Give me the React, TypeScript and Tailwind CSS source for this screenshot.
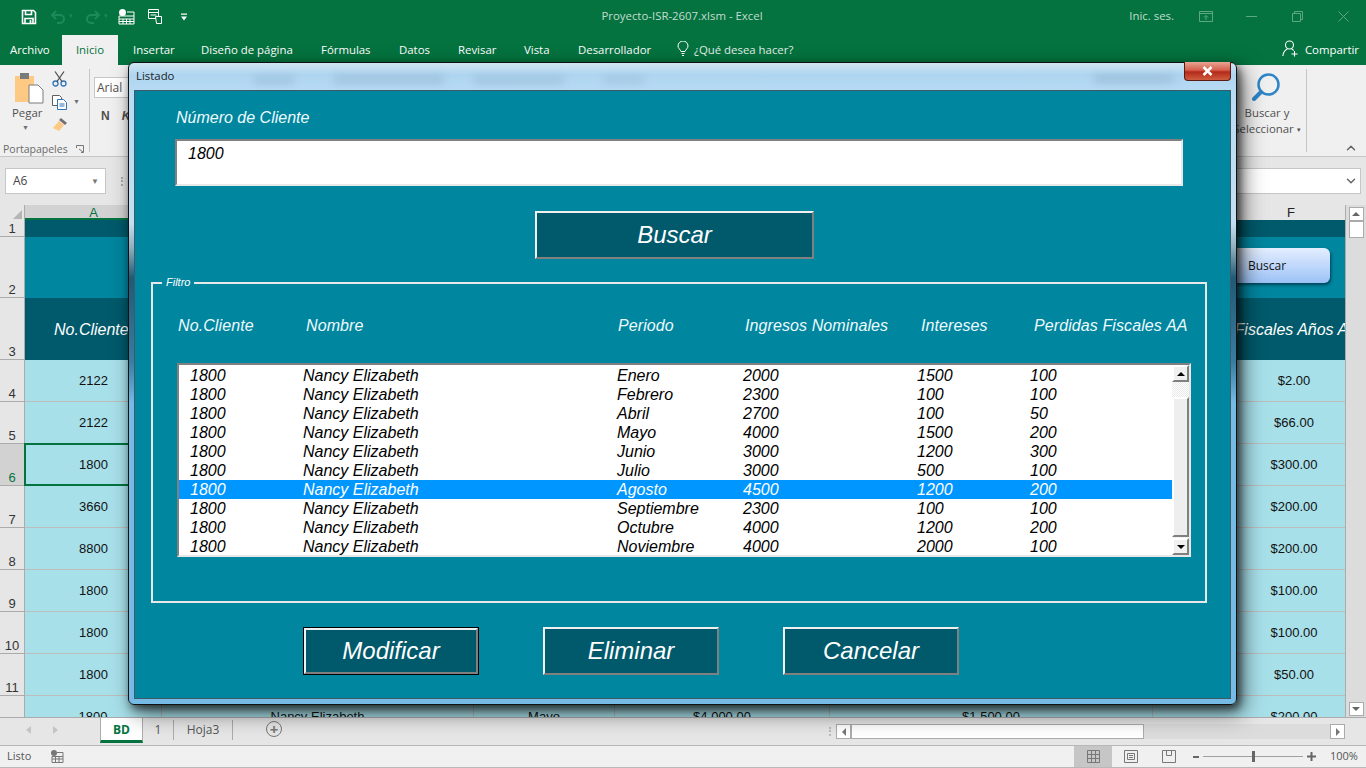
import { ChevronDown, ChevronUp } from "lucide-react"

const ui = "font-['Open_Sans',sans-serif]"

const tabs = [
	["Insertar", "w-[68px]"],
	["Diseño de página", "w-[120px]"],
	["Fórmulas", "w-[78px]"],
	["Datos", "w-[59px]"],
	["Revisar", "w-[66px]"],
	["Vista", "w-[54px]"],
	["Desarrollador", "w-[99px]"],
]

const listRows = [
	["Nancy Elizabeth", "Enero", "2000", "1500", "100"],
	["Nancy Elizabeth", "Febrero", "2300", "100", "100"],
	["Nancy Elizabeth", "Abril", "2700", "100", "50"],
	["Nancy Elizabeth", "Mayo", "4000", "1500", "200"],
	["Nancy Elizabeth", "Junio", "3000", "1200", "300"],
	["Nancy Elizabeth", "Julio", "3000", "500", "100"],
	["Nancy Elizabeth", "Agosto", "4500", "1200", "200"],
	["Nancy Elizabeth", "Septiembre", "2300", "100", "100"],
	["Nancy Elizabeth", "Octubre", "4000", "1200", "200"],
	["Nancy Elizabeth", "Noviembre", "4000", "2000", "100"],
]

const sheetRows = [
	["4", "2122", "$2.00"],
	["5", "2122", "$66.00"],
	["6", "1800", "$300.00"],
	["7", "3660", "$200.00"],
	["8", "8800", "$200.00"],
	["9", "1800", "$100.00"],
	["10", "1800", "$100.00"],
	["11", "1800", "$50.00"],
]

function Qat() {
	return (
		<div className="flex items-center pl-[21px] w-[400px]">
			<svg width="16" height="16" viewBox="0 0 16 16" fill="none" stroke="#fff" strokeWidth="1.6">
				<path d="M1.5 1.5h11l2 2v11h-13z" />
				<path d="M4.5 1.5v4h6v-4M4 14.5v-5h8v5" />
				<path d="M9.5 11v3" />
			</svg>
			<svg className="ml-[13px]" width="16" height="16" viewBox="0 0 16 16" fill="none" stroke="#1d8a5c" strokeWidth="2">
				<path d="M6 2 2 6l4 4M2 6h8a4 4 0 0 1 0 8H7" />
			</svg>
			<span className="ml-[3px] text-[7px] text-[#1d8a5c]">▾</span>
			<svg className="ml-[12px]" width="16" height="16" viewBox="0 0 16 16" fill="none" stroke="#1d8a5c" strokeWidth="2">
				<path d="m10 2 4 4-4 4M14 6H6a4 4 0 0 0 0 8h3" />
			</svg>
			<span className="ml-[3px] text-[7px] text-[#1d8a5c]">▾</span>
			<svg className="ml-[10px]" width="17" height="16" viewBox="0 0 17 16" fill="none">
				<circle cx="4.5" cy="3.5" r="3.5" fill="#fff" />
				<path d="M1 7h15v8H1z" fill="#04733f" stroke="#fff" />
				<path d="M1 10h15M1 12.5h15M5 10v5M8.5 10v5M12 10v5" stroke="#fff" />
				<path d="M9 3h7v4" stroke="#fff" />
			</svg>
			<svg className="ml-[12px]" width="17" height="17" viewBox="0 0 17 17" fill="none" stroke="#fff">
				<path d="M1.5 1.5h10v9h-10zM1.5 4.500h10M3.500 7h6" />
				<path d="M8.500 8.500h6v7h-5z" fill="#04733f" />
			</svg>
			<svg className="ml-[17px]" width="6" height="8" viewBox="0 0 7 8" fill="#fff">
				<path d="M0 0h7v1.500H0zM0 3.500h7L3.500 8z" />
			</svg>
		</div>
	)
}

function TitleBar() {
	return (
		<div className={`${ui} flex items-center h-[33px] bg-[#04733f] text-[11.4px] text-[#c3dccf]`}>
			<Qat />
			<div className="w-[567px] text-center pr-[3px] pb-[1px]">Proyecto-ISR-2607.xlsm - Excel</div>
			<div className="ml-auto flex items-center">
				<span className="pb-[1px]">Inic. ses.</span>
				<svg className="ml-[25px]" width="14" height="11" viewBox="0 0 14 11" fill="none" stroke="#5ea784">
					<path d="M.5.5h13v10H.5zM.5 2.500h13M7 9V4.500M5 6.500l2-2 2 2" />
				</svg>
				<svg className="ml-[33px]" width="11" height="1" viewBox="0 0 11 1" fill="none" stroke="#5ea784">
					<path d="M0 .5h11" />
				</svg>
				<svg className="ml-[35px]" width="11" height="11" viewBox="0 0 11 11" fill="none" stroke="#5ea784">
					<path d="M.5 2.500h8v8h-8zM2.500 2.500v-2h8v8h-2" />
				</svg>
				<svg className="ml-[35px] mr-[17px]" width="11" height="11" viewBox="0 0 11 11" fill="none" stroke="#5ea784">
					<path d="m.5.5 10 10M10.500.5l-10 10" />
				</svg>
			</div>
		</div>
	)
}

function TabBar() {
	return (
		<div className={`${ui} flex h-[32px] bg-[#04733f] text-[11.4px] text-white`}>
			<div className="pl-[10px] w-[62px] pt-[8px]">Archivo</div>
			<div className="w-[56px] h-[30px] mt-[2px] pt-[6px] mr-[15px] bg-[#f0f0f0] text-[#04733f] text-center">Inicio</div>
			{tabs.map(t => (
				<div key={t[0]} className={`${t[1]} pt-[8px]`}>{t[0]}</div>
			))}
			<svg className="mt-[8px]" width="12" height="15" viewBox="0 0 12 15" fill="none" stroke="#fff">
				<path d="M4 10.500C3.500 8.500 1 7.500 1 5a5 5 0 0 1 10 0c0 2.500-2.500 3.500-3 5.500zM4.500 12.500h3M5 14.500h2" />
			</svg>
			<div className="ml-[5px] pt-[8px] text-[#e3efe8]">¿Qué desea hacer?</div>
			<div className="ml-auto mr-[7px] pt-[8px] flex">
				<svg className="mt-[-1px] mr-[6px]" width="17" height="17" viewBox="0 0 17 17" fill="none" stroke="#fff" strokeWidth="1.100">
					<circle cx="7.500" cy="5" r="4" />
					<path d="M.8 16c.4-3.500 2.500-6 4.500-7M9.700 9c.8.400 1.500.9 2 1.500M12.500 11v5.500M9.500 14h6" />
				</svg>
				<span>Compartir</span>
			</div>
		</div>
	)
}

function Ribbon() {
	return (
		<div className={`${ui} relative flex h-[92px] bg-[#f0f0f0] border-b border-[#c6c6c6] text-[#505050]`}>
			<div className="relative w-[90px] my-[4px] border-r border-[#c6c6c6] flex">
				<div className="w-[53px] pl-[15px] pt-[3px]">
					<svg width="29" height="32" viewBox="0 0 29 32">
						<path d="M0 4h19v26H0z" fill="#fdc983" />
						<path d="M5 1h9v6H5z" fill="#7a7a7a" />
						<path d="M14 13h9l5 5v13H14z" fill="#fff" stroke="#7a7a7a" />
					</svg>
					<div className="text-[11.4px] -ml-[3px]">Pegar</div>
					<div className="text-[7px] leading-[8px] mt-[3px] ml-[7px] text-[#707070]">▼</div>
				</div>
				<div className="pt-[2px] -ml-[1px]">
					<svg width="15" height="16" viewBox="0 0 15 16" fill="none" stroke="#2e75b6" strokeWidth="1.300">
						<circle cx="3.500" cy="12.500" r="2.500" />
						<circle cx="11.500" cy="12.500" r="2.500" />
						<path d="M5 10.500 12 .5M10 10.500 3 .5" stroke="#505050" />
					</svg>
					<div className="flex items-center mt-[8px]">
						<svg width="16" height="15" viewBox="0 0 16 15" fill="#fff" stroke="#606060">
							<path d="M.5.5h7l2 2v8H.5z" />
							<path d="M5.500 4.500h6l3 3v7h-9zM7.500 9h5M7.500 11h5" stroke="#2e75b6" />
						</svg>
						<span className="ml-[5px] text-[7px] text-[#707070]">▼</span>
					</div>
					<svg className="mt-[7px]" width="16" height="15" viewBox="0 0 16 15">
						<path d="m9 1 6 5-2 2-6-5z" fill="#707070" />
						<path d="m7 4 5 4-5 6-6-3z" fill="#fdc983" />
					</svg>
				</div>
				<div className="absolute -bottom-[4px] left-[3px] flex items-center text-[10.5px] leading-[14px] text-[#6a6a6a]">
					<span>Portapapeles</span>
					<svg className="ml-[8px]" width="8" height="8" viewBox="0 0 8 8" fill="none" stroke="#777">
						<path d="M.5 3V.5H7.500V7.500H5M3 4l4 3" />
					</svg>
				</div>
			</div>
			<div className="pl-[4px] pt-[12px]">
				<div className="w-[120px] h-[21px] bg-white border border-[#c6c6c6] pl-[2px] text-[12px] leading-[19px]">Arial</div>
				<div className="mt-[9px] pl-[7px] text-[12px] font-bold font-['Liberation_Sans',sans-serif] flex gap-[12px]">
					<span>N</span>
					<span className="italic">K</span>
				</div>
			</div>
			<div className="ml-auto flex w-[59px] mr-[59px] my-[4px] justify-end border-r border-[#c6c6c6] relative">
				<div className="absolute left-[-20px] right-0 text-center">
					<svg className="ml-[24px] mt-[4px]" width="28" height="28" viewBox="0 0 28 28" fill="none" stroke="#2e86c8">
						<circle cx="16.500" cy="11.500" r="10" strokeWidth="2.500" />
						<path d="M9 19 2 26" strokeWidth="4" strokeLinecap="round" />
					</svg>
					<div className="text-[11.4px] leading-[16px] mt-[4px] whitespace-nowrap">Buscar y</div>
					<div className="text-[11.4px] leading-[16px] whitespace-nowrap">Seleccionar <span className="text-[7px] align-middle">▾</span></div>
				</div>
			</div>
			<ChevronUp className="absolute right-[8px] bottom-[1px] text-[#666]" size={14} strokeWidth={2.500} />
		</div>
	)
}

function FormulaBar() {
	return (
		<div className={`${ui} flex items-center h-[48px] bg-[#e6e6e6] pl-[5px] pr-[5px] text-[12px] text-[#444]`}>
			<div className="flex items-center w-[101px] h-[26px] bg-white border border-[#c6c6c6] pl-[7px]">
				A6
				<span className="ml-auto mr-[6px] text-[8px] text-[#777]">▼</span>
			</div>
			<div className="ml-[15px] w-[2px] h-[9px] border-l-2 border-dotted border-[#aaa]" />
			<div className="ml-auto flex items-center justify-end w-[300px] h-[26px] bg-white border border-[#c6c6c6] pr-[2px]">
				<ChevronDown size={14} strokeWidth={2.500} className="text-[#666]" />
			</div>
		</div>
	)
}

function RowHeader(props: { n: string, selected?: boolean }) {
	return (
		<div className={`w-[25px] shrink-0 flex items-end justify-center border-b border-r border-[#ababab] text-[13px] leading-[14px] ${props.selected ? "bg-[#d2d2d2] text-[#04733f]" : "bg-[#e6e6e6] text-[#333]"}`}>
			{props.n}
		</div>
	)
}

function SheetGrid() {
	return (
		<div className="flex h-[512px] font-['Liberation_Sans',sans-serif]">
			<div className="w-[1345px] flex flex-col overflow-hidden">
				<div className="flex h-[15px] shrink-0 bg-[#e6e6e6] text-[13px] leading-[15px] text-[#222]">
					<div className="w-[25px] border-r border-[#ababab] flex items-end justify-end pr-[2px] pb-[1px]">
						<div className="w-0 h-0 border-l-[9px] border-l-transparent border-b-[9px] border-b-[#b5b5b5]" />
					</div>
					<div className="w-[137px] bg-[#d2d2d2] text-center text-[#04733f] border-b-2 border-[#04733f]">A</div>
					<div className="flex-1" />
					<div className="w-[192px] pl-[84px] text-center">F</div>
				</div>
				<div className="flex h-[17px] shrink-0">
					<RowHeader n="1" />
					<div className="flex-1 bg-[#005a6b]" />
				</div>
				<div className="flex h-[61px] shrink-0">
					<RowHeader n="2" />
					<div className="flex-1 bg-[#00869f] relative">
						<div className={`${ui} absolute left-[1200px] top-[11px] w-[105px] h-[35px] rounded-[6px] bg-gradient-to-b from-[#e4eefe] to-[#9cc2f6] shadow-[1px_2px_3px_rgba(0,40,60,.7)] text-[12px] leading-[35px] pl-[23px] text-[#111]`}>Buscar</div>
					</div>
				</div>
				<div className="flex h-[62px] shrink-0">
					<RowHeader n="3" />
					<div className="flex-1 flex bg-[#005a6b] text-white text-[16px] italic">
						<div className="w-[137px] pt-[20px] pl-[29px]">No.Cliente</div>
						<div className="ml-auto w-[192px] pt-[20px] pl-[14px] whitespace-nowrap overflow-hidden">Perdidas Fiscales Años Anteriores</div>
					</div>
				</div>
				{sheetRows.map(r => (
					<div key={r[0]} className="flex h-[42px] shrink-0">
						<RowHeader n={r[0]} selected={r[0] === "6"} />
						<div className="flex-1 flex bg-[#a8e0ea] border-b border-[#bdbdbd] text-[13px] text-[#111] leading-[42px]">
							<div className={`w-[137px] text-center ${r[0] === "6" ? "outline-2 -outline-offset-1 outline-[#04733f]" : ""}`}>{r[1]}</div>
							<div className="ml-auto w-[192px] pl-[90px] text-center">{r[2]}</div>
						</div>
					</div>
				))}
				<div className="flex h-[42px] shrink-0">
					<RowHeader n="12" />
					<div className="flex-1 flex bg-[#a8e0ea] text-[13px] text-[#111] leading-[42px]">
						<div className="w-[137px] text-center border-r border-[#bdbdbd]">1800</div>
						<div className="w-[312px] text-center border-r border-[#bdbdbd]">Nancy Elizabeth</div>
						<div className="w-[141px] text-center border-r border-[#bdbdbd]">Mayo</div>
						<div className="w-[215px] text-center border-r border-[#bdbdbd]">$4,000.00</div>
						<div className="w-[323px] text-center border-r border-[#bdbdbd]">$1,500.00</div>
						<div className="flex-1 pl-[90px] text-center">$200.00</div>
					</div>
				</div>
			</div>
			<div className="flex-1 bg-[#dcdcdc] flex flex-col items-center pt-[2px] border-l border-[#ababab]">
				<div className="w-[15px] h-[14px] bg-white border border-[#ababab] flex items-center justify-center">
					<div className="w-0 h-0 border-x-[4px] border-x-transparent border-b-[4px] border-b-[#666]" />
				</div>
				<div className="w-[15px] h-[17px] bg-white border border-[#ababab]" />
				<div className="mt-auto w-[15px] h-[14px] mb-[1px] bg-white border border-[#ababab] flex items-center justify-center">
					<div className="w-0 h-0 border-x-[4px] border-x-transparent border-t-[4px] border-t-[#666]" />
				</div>
			</div>
		</div>
	)
}

function SheetTabs() {
	return (
		<div className={`${ui} flex h-[28px] bg-[#e6e6e6] border-t border-[#ababab] text-[12px] text-[#555]`}>
			<div className="w-[100px] flex items-center pl-[26px] gap-[22px] pb-[3px]">
				<div className="w-0 h-0 border-y-[4px] border-y-transparent border-r-[5px] border-r-[#c4c4c4]" />
				<div className="w-0 h-0 border-y-[4px] border-y-transparent border-l-[5px] border-l-[#c4c4c4]" />
			</div>
			<div className="w-[43px] h-[25px] bg-white border-x border-[#ababab] border-b-[3px] border-b-[#04733f] text-center font-bold text-[#04733f] leading-[23px]">BD</div>
			<div className="w-[31px] h-[20px] mt-[2px] text-center border-r border-[#ababab] leading-[20px]">1</div>
			<div className="w-[59px] h-[20px] mt-[2px] text-center border-r border-[#ababab] leading-[20px]">Hoja3</div>
			<div className="ml-[33px] mt-[3px] w-[16px] h-[16px] rounded-full border border-[#777] flex items-center justify-center text-[15px] leading-[12px] font-bold text-[#777]">+</div>
			<div className="ml-[547px] mt-[9px] h-[9px] w-[2px] border-l-2 border-dotted border-[#bbb]" />
			<div className="ml-[5px] mt-[6px] h-[15px] w-[15px] bg-white border border-[#ababab] flex items-center justify-center">
				<div className="w-0 h-0 border-y-[4px] border-y-transparent border-r-[4px] border-r-[#777]" />
			</div>
			<div className="mt-[6px] h-[15px] w-[494px] bg-[#dcdcdc] flex">
				<div className="w-[293px] bg-white border border-[#ababab]" />
				<div className="ml-auto w-[15px] bg-white border border-[#ababab] flex items-center justify-center">
					<div className="w-0 h-0 border-y-[4px] border-y-transparent border-l-[4px] border-l-[#777]" />
				</div>
			</div>
		</div>
	)
}

function StatusBar() {
	return (
		<div className={`${ui} flex items-center h-[23px] bg-[#f0f0f0] border-t border-b border-[#b8b8b8] text-[11px] text-[#555]`}>
			<span className="ml-[7px]">Listo</span>
			<svg className="ml-[20px]" width="13" height="13" viewBox="0 0 13 13" fill="none">
				<circle cx="3" cy="3" r="3" fill="#777" />
				<path d="M1 6.500h11v6H1zM1 9h11M4.500 6.500v6M8 6.500v6M6 2.500h6v4" stroke="#777" />
			</svg>
			<div className="ml-auto flex items-center h-full">
				<div className="w-[38px] h-full bg-[#c6c6c6] flex items-center justify-center">
					<svg width="13" height="13" viewBox="0 0 13 13" fill="none" stroke="#777">
						<path d="M.5.5h12v12H.5zM.5 4.500h12M.5 8.500h12M4.500.5v12M8.500.5v12" />
					</svg>
				</div>
				<svg className="ml-[12px]" width="14" height="13" viewBox="0 0 14 13" fill="none" stroke="#777">
					<path d="M.5.5h13v12H.5zM3.500 3.500h7v6h-7zM5 5.500h4M5 7.500h4" />
				</svg>
				<svg className="ml-[24px]" width="14" height="13" viewBox="0 0 14 13" fill="none" stroke="#777">
					<path d="M.5.5h13v12H.5zM4.500.5v5h5V.5" />
				</svg>
				<div className="ml-[17px] w-[6px] h-[2px] bg-[#666]" />
				<div className="relative ml-[4px] w-[100px] h-[1px] bg-[#a0a0a0]">
					<div className="absolute left-[49px] -top-[5px] w-[3px] h-[11px] bg-[#666]" />
				</div>
				<svg className="ml-[4px]" width="9" height="9" viewBox="0 0 9 9" stroke="#666" strokeWidth="2">
					<path d="M0 4.500h9M4.500 0v9" />
				</svg>
				<div className="ml-[14px] w-[27px] mr-[9px] whitespace-nowrap">100%</div>
			</div>
		</div>
	)
}

function FormButton(props: { label: string, width: string, isDefault?: boolean }) {
	return (
		<div className={`${props.width} h-[48px] ${props.isDefault ? "border border-black" : ""}`}>
			<div className="h-full flex items-center justify-center bg-[#005a6b] border-2 border-t-[#f0f0f0] border-l-[#f0f0f0] border-r-[#808080] border-b-[#808080] text-white text-[24px] italic">
				{props.label}
			</div>
		</div>
	)
}

function ListBox() {
	return (
		<div className="flex w-[1014px] h-[194px] bg-white border-2 border-t-[#808080] border-l-[#808080] border-r-[#e8e8e8] border-b-[#e8e8e8] text-[16px] italic text-black">
			<div className="flex-1 pt-[1px]">
				{listRows.map((r, i) => (
					<div key={i} className={`grid grid-cols-[113px_314px_126px_174px_113px_1fr] pl-[11px] h-[19px] leading-[19px] ${i === 6 ? "bg-[#0096ff] text-white" : ""}`}>
						<span>1800</span>
						{r.map((c, j) => <span key={j}>{c}</span>)}
					</div>
				))}
			</div>
			<div className="w-[17px] flex flex-col bg-[repeating-conic-gradient(#e8e8e8_0_25%,#fff_0_50%)] bg-[length:2px_2px]">
				<div className="h-[17px] bg-[#f0f0f0] border-2 border-t-white border-l-white border-r-[#808080] border-b-[#808080] flex items-center justify-center">
					<div className="w-0 h-0 border-x-[4px] border-x-transparent border-b-[4px] border-b-black" />
				</div>
				<div className="mt-[15px] h-[140px] bg-[#eeeeee] border-2 border-t-white border-l-white border-r-[#808080] border-b-[#808080]" />
				<div className="mt-auto h-[17px] bg-[#f0f0f0] border-2 border-t-white border-l-white border-r-[#808080] border-b-[#808080] flex items-center justify-center">
					<div className="w-0 h-0 border-x-[4px] border-x-transparent border-t-[4px] border-t-black" />
				</div>
			</div>
		</div>
	)
}

function Dialog() {
	return (
		<div className="absolute left-[128px] top-[62px] w-[1109px] h-[643px] flex flex-col rounded-[6px] border border-[#111] px-[5px] pb-[5px] shadow-[3px_4px_8px_rgba(0,0,0,.6),6px_8px_22px_rgba(0,0,0,.55)] bg-[linear-gradient(to_bottom,#d0e5f2_0,#aed5f0_12px,#b8dbf4_28px,#c4dff2_160px,#90aebe_185px,#205a74_215px,#3a7ea3_300px,#76bbe5_340px,#76bbe5_100%)] font-['Liberation_Sans',sans-serif]">
			<div className="relative h-[27px] shrink-0">
				<div className={`${ui} absolute left-[2px] top-[4px] text-[11.4px] text-[#222]`}>Listado</div>
				<div className="absolute left-[120px] top-[13px] w-[40px] h-[8px] bg-[#6c8ca8]/25 blur-[4px]" />
				<div className="absolute left-[200px] top-[12px] w-[110px] h-[9px] bg-[#6c8ca8]/25 blur-[4px]" />
				<div className="absolute left-[340px] top-[13px] w-[90px] h-[8px] bg-[#6c8ca8]/25 blur-[4px]" />
				<div className="absolute left-[470px] top-[13px] w-[40px] h-[8px] bg-[#6c8ca8]/20 blur-[4px]" />
				<div className="absolute left-[960px] top-[12px] w-[80px] h-[8px] bg-[#6c8ca8]/30 blur-[4px]" />
				<div className="absolute left-[1050px] top-[-1px] w-[47px] h-[19px] rounded-b-[4px] border border-[#5a1b14] border-t-0 bg-[linear-gradient(to_bottom,#e8a595,#d6604d_45%,#b32a1a_55%,#cf5d3f)] flex items-center justify-center">
					<svg width="11" height="10" viewBox="0 0 11 10" fill="none" stroke="#fff" strokeWidth="2.500">
						<path d="m1.500 1 8 8M9.500 1l-8 8" />
					</svg>
				</div>
			</div>
			<div className="flex-1 flex flex-col bg-[#00869f] border border-[#3c5a68]">
				<div className="ml-[41px] mt-[18px] h-[18px] text-[16px] leading-[18px] italic text-[#eefafd]">Número de Cliente</div>
				<div className="ml-[40px] mt-[12px] w-[1008px] h-[47px] bg-white border-2 border-t-[#808080] border-l-[#808080] border-r-[#e8e8e8] border-b-[#e8e8e8] pl-[11px] text-[16px] leading-[26px] italic text-black">1800</div>
				<div className="ml-[400px] mt-[25px]">
					<FormButton label="Buscar" width="w-[279px]" />
				</div>
				<div className="relative ml-[16px] mt-[23px] w-[1056px] h-[321px] border-2 border-[#e8e8e8] pl-[24px]">
					<div className="absolute left-[9px] -top-[8px] px-[4px] bg-[#00869f] text-[11px] leading-[13px] italic text-white">Filtro</div>
					<div className="mt-[33px] ml-[1px] h-[18px] flex text-[16px] leading-[18px] italic tracking-[.1px] text-[#eefafd]">
						<div className="w-[128px]">No.Cliente</div>
						<div className="w-[312px]">Nombre</div>
						<div className="w-[127px]">Periodo</div>
						<div className="w-[176px]">Ingresos Nominales</div>
						<div className="w-[113px]">Intereses</div>
						<div className="whitespace-nowrap">Perdidas Fiscales AA</div>
					</div>
					<div className="mt-[28px]">
						<ListBox />
					</div>
				</div>
				<div className="flex ml-[168px] mt-[24px] gap-[64px]">
					<FormButton label="Modificar" width="w-[176px]" isDefault />
					<FormButton label="Eliminar" width="w-[176px]" />
					<FormButton label="Cancelar" width="w-[176px]" />
				</div>
			</div>
		</div>
	)
}

export default function App() {
	return (
		<div className="relative flex flex-col w-[1366px] h-[768px] overflow-hidden bg-[#e6e6e6]">
			<TitleBar />
			<TabBar />
			<Ribbon />
			<FormulaBar />
			<SheetGrid />
			<SheetTabs />
			<StatusBar />
			<Dialog />
		</div>
	)
}
